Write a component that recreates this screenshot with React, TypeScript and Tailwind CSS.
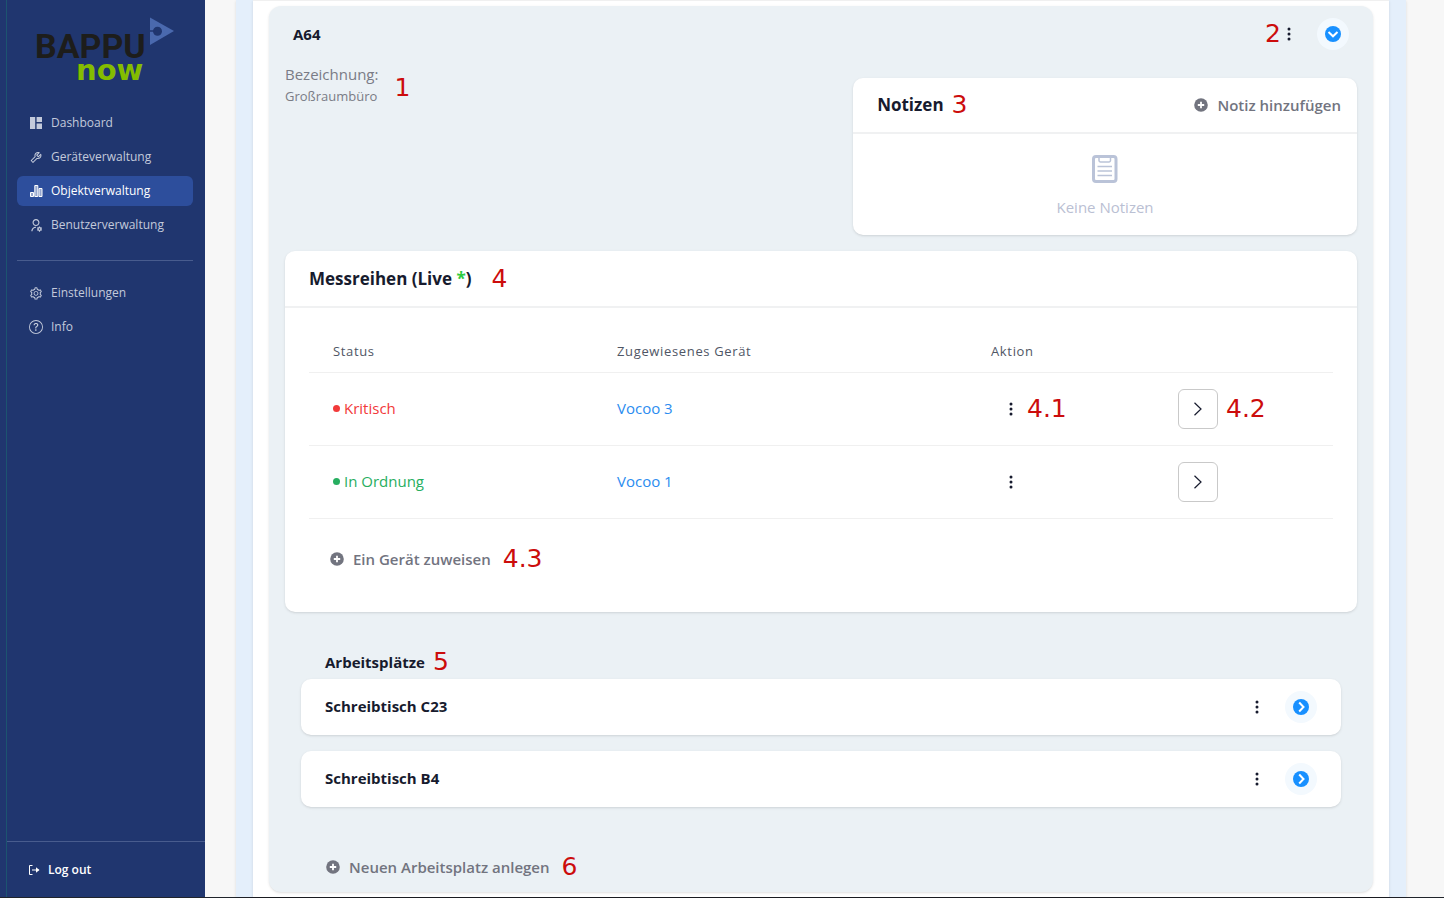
import React from 'react';
import { AiOutlineSetting, AiOutlineTool } from 'react-icons/ai';
import { BsQuestionCircle, BsThreeDotsVertical } from 'react-icons/bs';
import { RiUserSettingsLine } from 'react-icons/ri';

function Mark({ children }: { children: React.ReactNode }) {
  return (
    <span className="shrink-0 font-['DejaVu_Sans',sans-serif] text-[25px] leading-6 font-normal text-[#cc0c0c]">
      {children}
    </span>
  );
}

function Logo() {
  return (
    <svg width="144" height="76" viewBox="0 0 144 76" role="img" aria-label="BAPPU now">
      <text fontWeight="700">
        <tspan x="2" y="42" fill="#1d1d1b" fontFamily="Roboto, sans-serif" fontSize="34">
          BAPPU
        </tspan>
        <tspan x="43" y="64" fill="#84bd00" fontFamily="'DejaVu Sans', sans-serif" fontSize="29">
          now
        </tspan>
      </text>
      <path d="M117 1.500 L141 15 L117 29 Z" fill="#4a69ae" />
      <circle cx="124.500" cy="15.200" r="4.500" fill="#20366f" />
      <path d="M117 15 H123" stroke="#20366f" strokeWidth="1.500" />
    </svg>
  );
}

function DashboardIcon() {
  return (
    <svg width="12" height="12" viewBox="0 0 12 12" fill="currentColor">
      <path d="M0 0h5.200v12H0zM6.600 0H12v5H6.600zM6.600 6.500H12V12H6.600z" />
    </svg>
  );
}

function ChartIcon() {
  return (
    <svg width="13" height="12" viewBox="0 0 13 12" fill="currentColor" fillOpacity="0.500" stroke="currentColor">
      <path d="M.5 7.500h3v4h-3zM4.800.5h3v11h-3zM9 3.500h3v8H9z" />
    </svg>
  );
}

function LogoutIcon() {
  return (
    <svg width="11" height="10" viewBox="0 0 11 10" fill="none" stroke="currentColor">
      <path d="M3.500.5h-3v9h3M3 5h6.500" />
      <path d="M7 2.200 10.500 5 7 7.800z" fill="currentColor" stroke="none" />
    </svg>
  );
}

function PlusIcon() {
  return (
    <svg width="16" height="16" viewBox="0 0 16 16">
      <circle cx="8" cy="8" r="6.800" fill="#72747f" />
      <path d="M8 4.800v6.400M4.800 8h6.400" stroke="#fff" strokeWidth="1.800" />
    </svg>
  );
}

function ChevronIcon() {
  return (
    <svg width="16" height="16" viewBox="0 0 16 16" fill="none" stroke="#171b2e" strokeWidth="1.200">
      <path d="M4.500 1.800 11 8l-6.500 6.200" />
    </svg>
  );
}

function ClipboardIcon() {
  return (
    <svg width="26" height="28" viewBox="0 0 26 28" fill="none" stroke="#bac3d8">
      <rect x="1.500" y="1.500" width="22.500" height="25" rx="2.500" strokeWidth="3" />
      <path d="M7 3v2.500a1.500 1.500 0 0 0 1.500 1.500h8.500a1.500 1.500 0 0 0 1.500-1.500V3" strokeWidth="1.500" />
      <path d="M5.500 11.500h14.500M5.500 16h14.500M5.500 20.500h14.500" strokeWidth="1.300" />
    </svg>
  );
}

function ToggleButton({ open, label }: { open?: boolean; label: string }) {
  return (
    <button aria-label={label} className="flex h-8 w-8 items-center justify-center rounded-full bg-[#f3f9fe]">
      <svg width="16" height="16" viewBox="0 0 16 16" fill="none">
        <circle cx="8" cy="8" r="8" fill="#1890ff" />
        <path
          d={open ? 'M3.500 6 8 10.300 12.500 6' : 'M6.200 3.500 10.500 8 6.200 12.500'}
          stroke="#fff"
          strokeWidth="2"
        />
      </svg>
    </button>
  );
}

function MoreButton() {
  return (
    <button aria-label="Mehr" className="flex h-8 w-4 shrink-0 items-center justify-center text-[#171b2e]">
      <BsThreeDotsVertical size={16} />
    </button>
  );
}

function AddButton({ children }: { children: React.ReactNode }) {
  return (
    <button className="flex items-center gap-2 text-[15px] leading-6 font-semibold text-[#72747f]">
      <PlusIcon />
      {children}
    </button>
  );
}

const mainLinks = [
  { label: 'Dashboard', icon: <DashboardIcon /> },
  { label: 'Geräteverwaltung', icon: <AiOutlineTool size={15} /> },
  { label: 'Objektverwaltung', icon: <ChartIcon />, active: true },
  { label: 'Benutzerverwaltung', icon: <RiUserSettingsLine size={15} /> },
];

const otherLinks = [
  { label: 'Einstellungen', icon: <AiOutlineSetting size={15} /> },
  { label: 'Info', icon: <BsQuestionCircle size={14} /> },
];

const devices = [
  { status: 'Kritisch', color: 'text-[#f23a3a]', name: 'Vocoo 3', marks: ['4.1', '4.2'] },
  { status: 'In Ordnung', color: 'text-[#27ae60]', name: 'Vocoo 1', marks: [] },
];

const workplaces = ['Schreibtisch C23', 'Schreibtisch B4'];

function NavItem({ label, icon, active }: { label: string; icon: React.ReactNode; active?: boolean }) {
  return (
    <a
      href="#"
      className={
        active
          ? 'flex h-[30px] items-center gap-2 rounded-md bg-[#2d4e9c] px-3 text-white'
          : 'flex h-[30px] items-center gap-2 rounded-md px-3 text-[#c3cadb]'
      }
    >
      <span className="flex w-[14px] shrink-0 justify-center">{icon}</span>
      {label}
    </a>
  );
}

export default function App() {
  return (
    <div className="flex min-h-screen border-b border-[#20242b] bg-[#f7f7f7] font-['Open_Sans','Noto_Sans',sans-serif] text-[#171b2e]">
      {/* Sidebar */}
      <div className="flex w-[205px] shrink-0 bg-[#20366f]">
        <div className="w-[7px] shrink-0 border-r border-[#1c5470]" />
        <aside className="flex grow flex-col text-xs">
          <div className="pt-4 pl-[26px]">
            <Logo />
          </div>
          <nav className="mt-4 flex flex-col gap-1 pr-3 pl-[10px]">
            {mainLinks.map((link) => (
              <NavItem key={link.label} {...link} />
            ))}
            <hr className="mt-4 mb-[13px] border-[#485c8e]" />
            {otherLinks.map((link) => (
              <NavItem key={link.label} {...link} />
            ))}
          </nav>
          <div className="mt-auto border-t border-[#485c8e] px-[22px] pt-5 pb-[19px]">
            <button className="flex items-center gap-2 leading-4 font-semibold text-white">
              <LogoutIcon />
              Log out
            </button>
          </div>
        </aside>
      </div>

      {/* Content */}
      <main className="mr-[38px] ml-[31px] flex grow bg-[#e4effb] px-[17px] shadow-sm">
        <div className="grow border-t border-[#f0f0f0] bg-white px-4 pt-[5px] pb-[5px] shadow-sm">
          <section className="rounded-xl bg-[#ebf1f5] pb-[13px] shadow-sm">
            <header className="flex h-14 items-center justify-between px-6">
              <h1 className="text-[15px] font-bold">A64</h1>
              <div className="flex items-center">
                <Mark>2</Mark>
                <MoreButton />
                <div className="ml-5">
                  <ToggleButton open label="Zuklappen" />
                </div>
              </div>
            </header>

            <div className="flex items-start justify-between px-4">
              <div className="flex items-end gap-4 text-[#7a7c86]">
                <div>
                  <p className="text-[15px] leading-6">Bezeichnung:</p>
                  <p className="text-[13px] leading-5">Großraumbüro</p>
                </div>
                <div className="pb-1">
                  <Mark>1</Mark>
                </div>
              </div>

              {/* Notes */}
              <section className="mt-4 w-[47%] rounded-[10px] bg-white shadow">
                <header className="flex h-14 items-center justify-between border-b-2 border-[#f0f1f2] pr-4 pl-6">
                  <div className="flex items-center gap-2">
                    <h2 className="text-[17px] font-bold">Notizen</h2>
                    <Mark>3</Mark>
                  </div>
                  <AddButton>Notiz hinzufügen</AddButton>
                </header>
                <div className="flex flex-col items-center gap-3 pt-[21px] pb-4 text-[15px] text-[#bac0d3]">
                  <ClipboardIcon />
                  <p className="leading-6 font-medium">Keine Notizen</p>
                </div>
              </section>
            </div>

            {/* Measurements */}
            <section className="mx-4 mt-4 rounded-[10px] bg-white shadow">
              <header className="flex h-[57px] items-center gap-5 border-b-2 border-[#f0f1f2] px-6">
                <h2 className="text-[17px] font-bold">
                  Messreihen (Live <span className="text-[#2ecc40]">*</span>)
                </h2>
                <Mark>4</Mark>
              </header>
              <div className="px-6 pt-6 pb-[41px]">
                <table className="w-full table-fixed text-left">
                  <thead>
                    <tr className="h-10 border-b border-[#f0f0f0] text-[13px] tracking-wider text-[#4f5665]">
                      <th className="w-[284px] px-6 font-normal">Status</th>
                      <th className="w-[374px] px-6 font-normal">Zugewiesenes Gerät</th>
                      <th className="w-[187px] px-6 font-normal">Aktion</th>
                      <th />
                    </tr>
                  </thead>
                  <tbody className="text-[15px]">
                    {devices.map((device) => (
                      <tr key={device.name} className="h-[73px] border-b border-[#f0f0f0]">
                        <td className="px-6">
                          <span className={`flex items-center gap-1 ${device.color}`}>
                            <span className="h-[7px] w-[7px] rounded-full bg-current" />
                            {device.status}
                          </span>
                        </td>
                        <td className="px-6">
                          <a href="#" className="text-[#2b8cf0]">
                            {device.name}
                          </a>
                        </td>
                        <td className="px-6">
                          <div className="flex items-center gap-2 pl-3">
                            <MoreButton />
                            {device.marks[0] && <Mark>{device.marks[0]}</Mark>}
                          </div>
                        </td>
                        <td className="px-6">
                          <div className="flex items-center gap-2">
                            <button
                              aria-label="Öffnen"
                              className="flex h-10 w-10 shrink-0 items-center justify-center rounded-md border border-[#c9c9c9]"
                            >
                              <ChevronIcon />
                            </button>
                            {device.marks[1] && <Mark>{device.marks[1]}</Mark>}
                          </div>
                        </td>
                      </tr>
                    ))}
                  </tbody>
                </table>
                <div className="mt-7 flex items-center gap-3 pl-5">
                  <AddButton>Ein Gerät zuweisen</AddButton>
                  <Mark>4.3</Mark>
                </div>
              </div>
            </section>

            {/* Workplaces */}
            <section className="mt-9 px-8">
              <div className="flex items-center gap-2 px-6 pb-[3px]">
                <h2 className="text-[15px] leading-7 font-bold">Arbeitsplätze</h2>
                <Mark>5</Mark>
              </div>
              <ul className="flex flex-col gap-4">
                {workplaces.map((name) => (
                  <li key={name} className="flex h-14 items-center justify-between rounded-[10px] bg-white px-6 shadow">
                    <h3 className="text-[15px] font-bold">{name}</h3>
                    <div className="flex items-center gap-5">
                      <MoreButton />
                      <ToggleButton label="Aufklappen" />
                    </div>
                  </li>
                ))}
              </ul>
              <div className="mt-12 flex items-center gap-3 pl-6">
                <AddButton>Neuen Arbeitsplatz anlegen</AddButton>
                <Mark>6</Mark>
              </div>
            </section>
          </section>
        </div>
      </main>
    </div>
  );
}
